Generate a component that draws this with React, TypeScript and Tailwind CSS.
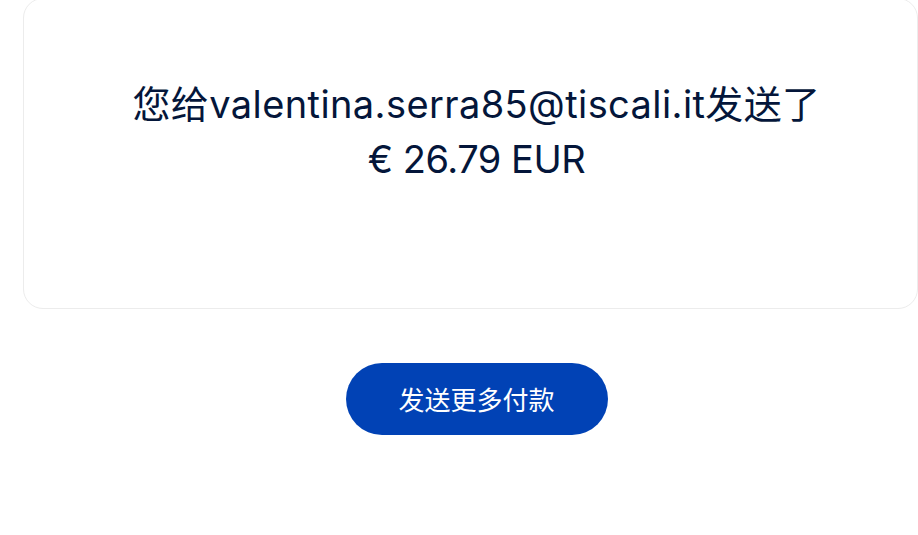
import React from 'react';

const FONT = "font-['Inter','Noto_Sans_CJK_SC',sans-serif]";

export default function App() {
  return (
    <div className={`min-h-screen w-full overflow-hidden bg-white ${FONT}`}>
      <div className="ml-[23px] -mt-[2px] w-[895px]">
        {/* Confirmation card */}
        <div className="h-[311px] rounded-[20px] border border-[#ececec] bg-white pl-[12px] pt-[78px] text-center text-[38px] leading-[54px] text-[#04163a]">
          <p className="tracking-[0.4px]">您给valentina.serra85@tiscali.it发送了</p>
          <p className="pt-[1px] tracking-[-0.5px]">€ 26.79 EUR</p>
        </div>

        {/* Action */}
        <div className="flex justify-center pl-[12px] pt-[54px]">
          <button className="flex h-[72px] w-[262px] items-center justify-center rounded-full bg-[#0142b5] pt-[2px] text-[26px] text-white">
            发送更多付款
          </button>
        </div>
      </div>
    </div>
  );
}
